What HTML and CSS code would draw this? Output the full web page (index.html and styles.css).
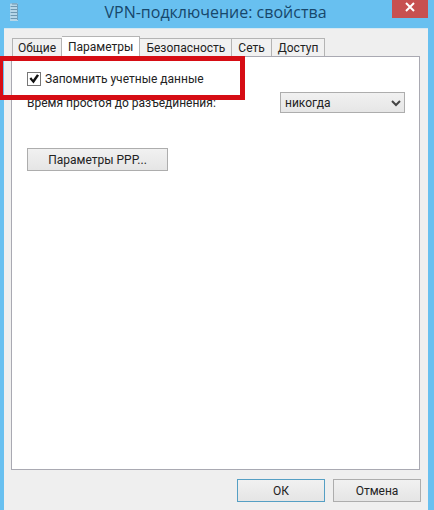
FILE: index.html
```html
<!DOCTYPE html>
<html lang="ru">
<head>
  <meta charset="UTF-8" />
  <meta name="viewport" content="width=device-width, initial-scale=1.0" />
  <title>VPN-подключение: свойства</title>
  <link rel="stylesheet" href="styles.css">
</head>
<body>

  <div class="window">
    <header class="title-bar">
      <svg class="app-icon" width="10" height="20" viewBox="0 0 10 20" aria-hidden="true">
        <rect x="1" y="1" width="8" height="18" rx="1" fill="#8fc0dc" />
        <path d="M1 3h8M1 6h8M1 9h8M1 12h8M1 15h8M1 18h8" stroke="#dcebf3" stroke-width="1" />
        <path d="M3 2h5M2 4.500h6M2 7.500h6M2 10.500h6M2 13.500h6M2 16.500h6" stroke="#6f97b0" stroke-width="1" />
        <path d="M8.500 2v16" stroke="#6f9fbc" />
      </svg>
      <h1>VPN-подключение: свойства</h1>
      <button class="close-btn" type="button" aria-label="Закрыть">
        <svg width="10" height="10" viewBox="0 0 10 10" aria-hidden="true">
          <path d="M1 1l8 8M9 1l-8 8" stroke="#fff" stroke-width="2" />
        </svg>
      </button>
    </header>

    <main class="content">
      <div class="tabs" role="tablist">
        <button class="tab" type="button" role="tab">Общие</button>
        <button class="tab active" type="button" role="tab" aria-selected="true">Параметры</button>
        <button class="tab" type="button" role="tab">Безопасность</button>
        <button class="tab" type="button" role="tab">Сеть</button>
        <button class="tab" type="button" role="tab">Доступ</button>
      </div>

      <div class="panel" role="tabpanel">
        <label class="check-row">
          <input type="checkbox" checked>
          <span>Запомнить учетные данные</span>
        </label>

        <div class="idle-row">
          <label for="idle">Время простоя до разъединения:</label>
          <div class="select-wrap">
            <select id="idle">
              <option>никогда</option>
            </select>
            <svg class="chevron" width="10" height="7" viewBox="0 0 10 7" aria-hidden="true">
              <path d="M1 1l4 4 4-4" fill="none" stroke="#444" stroke-width="2" />
            </svg>
          </div>
        </div>

        <button class="btn ppp-btn" type="button">Параметры PPP...</button>
        <div class="highlight"></div>
      </div>

      <footer class="actions">
        <button class="btn default" type="button">ОК</button>
        <button class="btn" type="button">Отмена</button>
      </footer>
    </main>
  </div>

</body>
</html>
```

FILE: styles.css
```css
* {
  box-sizing: border-box;
  margin: 0;
  padding: 0;
}

body {
  font-family: Roboto, "Liberation Sans", sans-serif;
  font-size: 12px;
  color: #222;
}

button,
select {
  font: inherit;
  color: inherit;
}

.window {
  display: flex;
  flex-direction: column;
  min-height: 100vh;
  padding: 0 6px 0 4px;
  background: #68c0f0;
}

/* Title bar */
.title-bar {
  display: flex;
  align-items: flex-start;
  height: 28px;
  padding-left: 5px;
}

.app-icon {
  margin-top: 2px;
}

.title-bar h1 {
  flex: 1;
  padding-left: 20px;
  font-family: "Open Sans", "Noto Sans", sans-serif;
  font-size: 16px;
  font-weight: normal;
  line-height: 24px;
  text-align: center;
  color: #17476b;
}

.close-btn {
  display: flex;
  justify-content: center;
  align-items: center;
  width: 36px;
  height: 18px;
  padding-bottom: 4px;
  border: none;
  background: #c75050;
}

.content {
  display: flex;
  flex: 1;
  flex-direction: column;
  padding: 7px 8px 8px 7px;
  border-top: 1px solid #d5e8f2;
  background: #efefef;
}

/* Tabs */
.tabs {
  display: flex;
  align-items: flex-end;
  height: 20px;
  padding-left: 1px;
}

.tab {
  height: 18px;
  padding: 0 6px;
  border: 1px solid #b4b4b4;
  border-bottom: none;
  border-left: none;
  background: #f1f1f1;
  line-height: 18px;
  white-space: nowrap;
}

.tab:first-child {
  padding: 0 5px;
  border-left: 1px solid #b4b4b4;
}

.tab.active {
  position: relative;
  z-index: 1;
  height: 21px;
  margin-bottom: -1px;
  background: #fff;
}

.panel {
  position: relative;
  flex: 1;
  padding: 14px 14px 14px 15px;
  border: 1px solid #a9a9b2;
  background: #fff;
}

.check-row {
  display: flex;
  align-items: center;
  gap: 4px;
  height: 16px;
}

.check-row input {
  appearance: none;
  width: 14px;
  height: 14px;
  border: 1px solid #777;
  background: #fff;
}

.check-row input:checked::before {
  content: "";
  display: block;
  width: 12px;
  height: 12px;
  background: #111;
  clip-path: polygon(12% 48%, 27% 36%, 42% 57%, 75% 10%, 92% 20%, 46% 88%);
}

.idle-row {
  display: flex;
  justify-content: space-between;
  align-items: center;
  margin-top: 5px;
}

.select-wrap {
  position: relative;
}

.select-wrap select {
  appearance: none;
  display: block;
  width: 125px;
  height: 21px;
  padding: 0 4px;
  border: 1px solid #adadad;
  border-radius: 0;
  background: linear-gradient(#f1f1f1, #e6e6e6);
}

.chevron {
  position: absolute;
  top: 8px;
  right: 4px;
  pointer-events: none;
}

.btn {
  width: 88px;
  height: 23px;
  border: 1px solid #adadad;
  background: linear-gradient(#f1f1f1, #e5e5e5);
}

.btn.default {
  border-color: #559fc4;
}

.ppp-btn {
  display: block;
  width: 141px;
  margin-top: 35px;
}

/* Red frame around the checkbox */
.highlight {
  position: absolute;
  z-index: 2;
  top: -1px;
  left: -14px;
  width: 247px;
  height: 44px;
  border: 5px solid #d60d14;
  pointer-events: none;
}

.actions {
  display: flex;
  justify-content: flex-end;
  gap: 8px;
  margin: 9px -1px 0 0;
}
```
